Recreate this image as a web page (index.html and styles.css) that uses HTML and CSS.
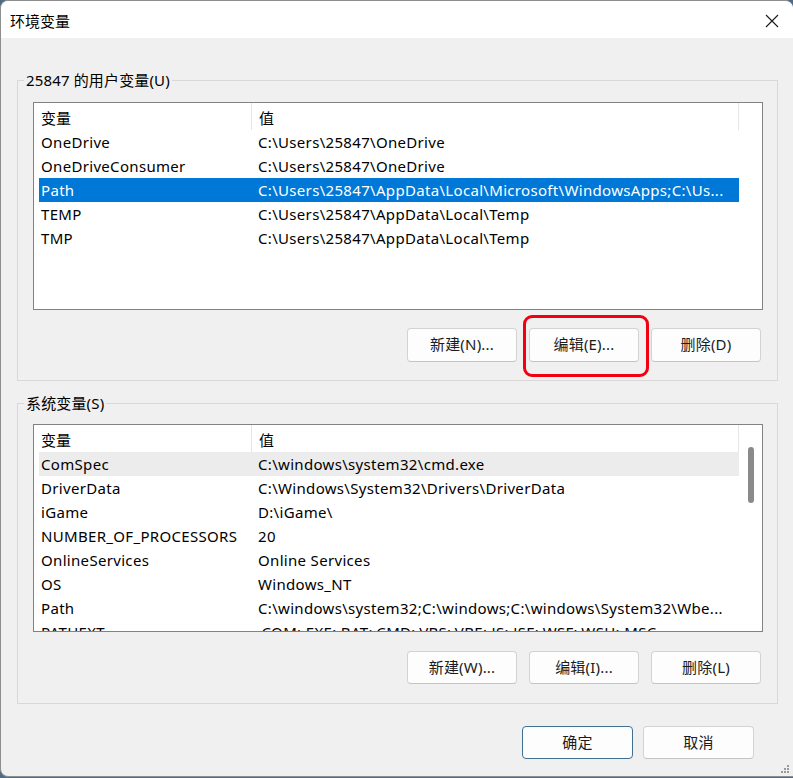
FILE: index.html
```html
<!DOCTYPE html>
<html lang="zh-CN">
<head>
<meta charset="utf-8">
<title>环境变量</title>
<link rel="stylesheet" href="styles.css">
</head>
<body>
<div class="window">
  <div class="titlebar">
    <span class="title">环境变量</span>
    <span class="close" aria-label="关闭">
      <svg width="14" height="14" viewBox="0 0 14 14"><path d="M1 1 L13 13 M13 1 L1 13" stroke="#1a1a1a" stroke-width="1.1" fill="none"/></svg>
    </span>
  </div>
  <div class="content">
    <section class="group group-user">
      <span class="group-label">25847 的用户变量(U)</span>
      <div class="list">
        <div class="list-head">
          <div class="h h1">变量</div>
          <div class="h h2">值</div>
        </div>
        <div class="rows">
          <div class="row"><span class="c1">OneDrive</span><span class="c2">C:\Users\25847\OneDrive</span></div>
          <div class="row"><span class="c1">OneDriveConsumer</span><span class="c2">C:\Users\25847\OneDrive</span></div>
          <div class="row selected"><span class="c1">Path</span><span class="c2">C:\Users\25847\AppData\Local\Microsoft\WindowsApps;C:\Us...</span></div>
          <div class="row"><span class="c1">TEMP</span><span class="c2">C:\Users\25847\AppData\Local\Temp</span></div>
          <div class="row"><span class="c1">TMP</span><span class="c2">C:\Users\25847\AppData\Local\Temp</span></div>
        </div>
      </div>
      <div class="btn-row">
        <button class="btn">新建(N)...</button>
        <span class="btn-wrap">
          <button class="btn">编辑(E)...</button>
          <span class="highlight"></span>
        </span>
        <button class="btn">删除(D)</button>
      </div>
    </section>

    <section class="group group-system">
      <span class="group-label">系统变量(S)</span>
      <div class="list">
        <div class="list-head">
          <div class="h h1">变量</div>
          <div class="h h2">值</div>
        </div>
        <div class="rows">
          <div class="row hover"><span class="c1">ComSpec</span><span class="c2">C:\windows\system32\cmd.exe</span></div>
          <div class="row"><span class="c1">DriverData</span><span class="c2">C:\Windows\System32\Drivers\DriverData</span></div>
          <div class="row"><span class="c1">iGame</span><span class="c2">D:\iGame\</span></div>
          <div class="row"><span class="c1">NUMBER_OF_PROCESSORS</span><span class="c2">20</span></div>
          <div class="row"><span class="c1">OnlineServices</span><span class="c2">Online Services</span></div>
          <div class="row"><span class="c1">OS</span><span class="c2">Windows_NT</span></div>
          <div class="row"><span class="c1">Path</span><span class="c2">C:\windows\system32;C:\windows;C:\windows\System32\Wbe...</span></div>
          <div class="row"><span class="c1">PATHEXT</span><span class="c2">.COM;.EXE;.BAT;.CMD;.VBS;.VBE;.JS;.JSE;.WSF;.WSH;.MSC</span></div>
        </div>
        <span class="thumb"></span>
      </div>
      <div class="btn-row">
        <button class="btn">新建(W)...</button>
        <button class="btn">编辑(I)...</button>
        <button class="btn">删除(L)</button>
      </div>
    </section>

    <div class="dialog-btns">
      <button class="btn btn-default">确定</button>
      <button class="btn">取消</button>
    </div>
  </div>
  <svg class="grip" width="10" height="10" viewBox="0 0 10 10">
    <rect x="7" y="1" width="2" height="2" fill="#9a9a9a"/>
    <rect x="4" y="4" width="2" height="2" fill="#9a9a9a"/>
    <rect x="7" y="4" width="2" height="2" fill="#9a9a9a"/>
    <rect x="1" y="7" width="2" height="2" fill="#9a9a9a"/>
    <rect x="4" y="7" width="2" height="2" fill="#9a9a9a"/>
    <rect x="7" y="7" width="2" height="2" fill="#9a9a9a"/>
  </svg>
</div>
</body>
</html>
```
FILE: styles.css
```css
* { box-sizing: border-box; }

html, body {
  margin: 0;
  padding: 0;
  background: #4f6b84;
}

body {
  width: 793px;
  height: 778px;
  overflow: hidden;
  font-family: "Noto Sans", "Noto Sans CJK SC", sans-serif;
  font-size: 15px;
  color: #000;
}

.window {
  position: relative;
  width: 793px;
  height: 777px;
  background: #f0f0f0;
  border-top: 1px solid #8e8e8e;
  border-left: 1px solid #8e8e8e;
  border-bottom: 1px solid #8e8e8e;
  border-radius: 8px 8px 0 8px;
  overflow: hidden;
}

.titlebar {
  height: 37px;
  background: #fff;
  display: flex;
  align-items: center;
  justify-content: space-between;
  padding-left: 9px;
  padding-right: 14px;
}

.title {
  font-family: "Noto Sans CJK SC", sans-serif;
  font-size: 15px;
  line-height: 20px;
  margin-top: 2px;
}

.close {
  display: flex;
  align-items: center;
  justify-content: center;
  width: 14px;
  height: 14px;
  margin-top: 3px;
}

.content {
  padding: 42px 15px 0 16px;
}

.group {
  position: relative;
  border: 1px solid #d8d8d8;
  padding: 21px 14px 18px 15px;
}

.group-system {
  margin-top: 22px;
  padding-top: 20px;
  padding-bottom: 19px;
}

.group-label {
  position: absolute;
  top: -12px;
  left: 6px;
  padding: 0 2px;
  line-height: 22px;
  background: #f0f0f0;
  letter-spacing: 0.15px;
  font-family: "Noto Sans", "Noto Sans CJK SC", sans-serif;
}

.list {
  position: relative;
  height: 208px;
  border: 1px solid #828282;
  background: #fff;
  display: flex;
  flex-direction: column;
  overflow: hidden;
}

.list-head {
  display: flex;
  height: 27px;
  flex: none;
}

.h {
  padding-top: 3px;
  padding-left: 7px;
  line-height: 24px;
  border-right: 1px solid #e5e5e5;
  font-family: "Noto Sans CJK SC", sans-serif;
}

.h1 { width: 218px; }
.h2 { width: 487px; }

.rows {
  padding-left: 5px;
  display: flex;
  flex-direction: column;
}

.row {
  display: flex;
  width: 700px;
  height: 24px;
  line-height: 24px;
  flex: none;
  white-space: nowrap;
  letter-spacing: 0.32px;
}

.row.selected {
  background: #0078d7;
  color: #fff;
}

.row.hover {
  background: #ececec;
}

.c1 {
  width: 219px;
  padding-left: 2px;
  flex: none;
  overflow: hidden;
}

.c2 {
  flex: 1;
  overflow: hidden;
}

.thumb {
  position: absolute;
  top: 22px;
  right: 8px;
  width: 6px;
  height: 56px;
  border-radius: 3px;
  background: #8a8a8a;
}

.btn-row {
  display: flex;
  justify-content: flex-end;
  gap: 12px;
  padding-right: 2px;
  margin-top: 18px;
}

.group-system .btn-row {
  margin-top: 19px;
}

.btn {
  width: 110px;
  height: 34px;
  padding: 0 0 2px 0;
  background: #fdfdfd;
  border: 1px solid #d3d3d3;
  border-bottom-color: #c4c4c4;
  border-radius: 4px;
  font-family: "Noto Sans", "Noto Sans CJK SC", sans-serif;
  font-size: 15px;
  color: #1b1b1b;
  line-height: 20px;
  letter-spacing: 0.2px;
}

.group-system .btn {
  height: 33px;
}

.btn-wrap {
  position: relative;
  display: flex;
}

.highlight {
  position: absolute;
  left: -6px;
  top: -13px;
  width: 126px;
  height: 62px;
  border: 3px solid #f2000f;
  border-radius: 9px;
}

.dialog-btns {
  display: flex;
  justify-content: flex-end;
  gap: 10px;
  margin-top: 22px;
  padding-right: 24px;
}

.dialog-btns .btn {
  width: 111px;
  height: 33px;
}

.btn-default {
  border-color: #3f6f93;
}

.grip {
  position: absolute;
  right: 3px;
  bottom: 2px;
}
```
